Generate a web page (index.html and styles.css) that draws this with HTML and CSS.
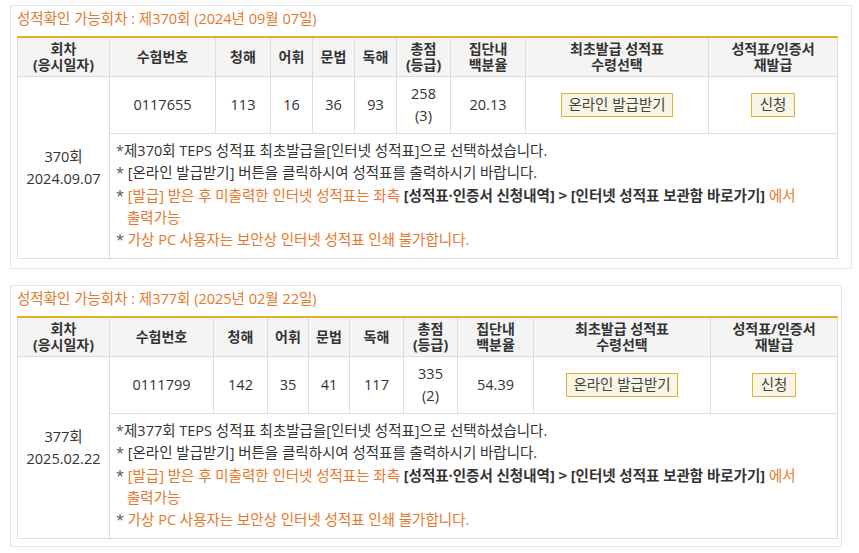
FILE: index.html
```html
<!DOCTYPE html>
<html lang="ko">
<head>
<meta charset="utf-8">
<link rel="stylesheet" href="styles.css">
</head>
<body>
<section class="box box-a">
  <h2 class="title">성적확인 가능회차 : 제370회 (2024년 09월 07일)</h2>
  <table class="score t1">
    <colgroup>
      <col class="c1"><col class="c2"><col class="c3"><col class="c4"><col class="c5"><col class="c6"><col class="c7"><col class="c8"><col class="c9"><col class="c10">
    </colgroup>
    <thead>
      <tr>
        <th>회차<br>(응시일자)</th>
        <th>수험번호</th>
        <th>청해</th>
        <th>어휘</th>
        <th>문법</th>
        <th>독해</th>
        <th>총점<br>(등급)</th>
        <th>집단내<br>백분율</th>
        <th>최초발급 성적표<br>수령선택</th>
        <th>성적표/인증서<br>재발급</th>
      </tr>
    </thead>
    <tbody>
      <tr>
        <td rowspan="2" class="round">370회<br>2024.09.07</td>
        <td>0117655</td>
        <td>113</td>
        <td>16</td>
        <td>36</td>
        <td>93</td>
        <td>258<br>(3)</td>
        <td>20.13</td>
        <td><span class="btn">온라인 발급받기</span></td>
        <td><span class="btn btn-sm">신청</span></td>
      </tr>
      <tr>
        <td colspan="9" class="notes">
          <div class="note"><span class="ast">*</span>제370회 TEPS 성적표 최초발급을[인터넷 성적표]으로 선택하셨습니다.</div>
          <div class="note"><span class="ast">*</span> [온라인 발급받기] 버튼을 클릭하시여 성적표를 출력하시기 바랍니다.</div>
          <div class="note hang"><span class="ast">*</span> <span class="or">[발급] 받은 후 미출력한 인터넷 성적표는 좌측</span> <b>[성적표·인증서 신청내역] <span class="arr">&gt;</span> [인터넷 성적표 보관함 바로가기]</b> <span class="or">에서<br>출력가능</span></div>
          <div class="note"><span class="ast">*</span> <span class="or">가상 PC 사용자는 보안상 인터넷 성적표 인쇄 불가합니다.</span></div>
        </td>
      </tr>
    </tbody>
  </table>
</section>

<section class="box box-b">
  <h2 class="title">성적확인 가능회차 : 제377회 (2025년 02월 22일)</h2>
  <table class="score t2">
    <colgroup>
      <col class="c1"><col class="c2"><col class="c3"><col class="c4"><col class="c5"><col class="c6"><col class="c7"><col class="c8"><col class="c9"><col class="c10">
    </colgroup>
    <thead>
      <tr>
        <th>회차<br>(응시일자)</th>
        <th>수험번호</th>
        <th>청해</th>
        <th>어휘</th>
        <th>문법</th>
        <th>독해</th>
        <th>총점<br>(등급)</th>
        <th>집단내<br>백분율</th>
        <th>최초발급 성적표<br>수령선택</th>
        <th>성적표/인증서<br>재발급</th>
      </tr>
    </thead>
    <tbody>
      <tr>
        <td rowspan="2" class="round">377회<br>2025.02.22</td>
        <td>0111799</td>
        <td>142</td>
        <td>35</td>
        <td>41</td>
        <td>117</td>
        <td>335<br>(2)</td>
        <td>54.39</td>
        <td><span class="btn">온라인 발급받기</span></td>
        <td><span class="btn btn-sm">신청</span></td>
      </tr>
      <tr>
        <td colspan="9" class="notes">
          <div class="note"><span class="ast">*</span>제377회 TEPS 성적표 최초발급을[인터넷 성적표]으로 선택하셨습니다.</div>
          <div class="note"><span class="ast">*</span> [온라인 발급받기] 버튼을 클릭하시여 성적표를 출력하시기 바랍니다.</div>
          <div class="note hang"><span class="ast">*</span> <span class="or">[발급] 받은 후 미출력한 인터넷 성적표는 좌측</span> <b>[성적표·인증서 신청내역] <span class="arr">&gt;</span> [인터넷 성적표 보관함 바로가기]</b> <span class="or">에서<br>출력가능</span></div>
          <div class="note"><span class="ast">*</span> <span class="or">가상 PC 사용자는 보안상 인터넷 성적표 인쇄 불가합니다.</span></div>
        </td>
      </tr>
    </tbody>
  </table>
</section>
</body>
</html>
```

FILE: styles.css
```css
html, body {
  background: #ffffff;
}
body {
  margin: 5px 0 0 10px;
  font-family: "Open Sans", "Noto Sans CJK KR", sans-serif;
  font-size: 14.5px;
  color: #333333;
}
.box {
  border: 1px solid #e6e6e6;
  padding: 3px 0 7px 6px;
  box-sizing: border-box;
}
.box-a {
  width: 842px;
  padding-bottom: 9px;
}
.box-b {
  width: 832px;
  margin-top: 16px;
}
.title {
  margin: 0 0 7px 0;
  font-size: 14.5px;
  line-height: 20px;
  font-weight: normal;
  color: #e5782c;
}
.score {
  width: 820px;
  table-layout: fixed;
  border-collapse: collapse;
  border-top: 2px solid #e3b224;
}
.score th,
.score td {
  border: 1px solid #dddddd;
  text-align: center;
  vertical-align: middle;
}
.score th {
  background: #f4f4f4;
  font-weight: bold;
  font-size: 14px;
  line-height: 16px;
  padding: 3px 0;
  color: #333333;
  border-top: none;
}
.score td {
  line-height: 22px;
  padding: 6px 0;
  color: #333333;
}
.t1 .c1 { width: 92px; }
.t1 .c2 { width: 106px; }
.t1 .c3 { width: 55px; }
.t1 .c4 { width: 42px; }
.t1 .c5 { width: 42px; }
.t1 .c6 { width: 42px; }
.t1 .c7 { width: 54px; }
.t1 .c8 { width: 75px; }
.t1 .c9 { width: 183px; }
.t1 .c10 { width: 129px; }

.t2 .c1 { width: 92px; }
.t2 .c2 { width: 104px; }
.t2 .c3 { width: 54px; }
.t2 .c4 { width: 41px; }
.t2 .c5 { width: 41px; }
.t2 .c6 { width: 54px; }
.t2 .c7 { width: 54px; }
.t2 .c8 { width: 76px; }
.t2 .c9 { width: 177px; }
.t2 .c10 { width: 127px; }

.btn {
  display: inline-block;
  height: 24px;
  box-sizing: border-box;
  padding: 0 6px;
  line-height: 22px;
  border: 1px solid #e2b43a;
  background: #f8f5e5;
  color: #444444;
  vertical-align: middle;
}
.btn-sm {
  padding: 0 8px;
}
.score td.notes {
  text-align: left;
  padding: 6px 6px 7px 6px;
  line-height: 22px;
}
.note.hang {
  padding-left: 11px;
  text-indent: -11px;
}
.ast {
  color: #555555;
}
.or {
  color: #e5782c;
}
.notes b {
  color: #333333;
}
.arr {
  font-family: "Noto Sans CJK KR", sans-serif;
  font-weight: bold;
}
```
